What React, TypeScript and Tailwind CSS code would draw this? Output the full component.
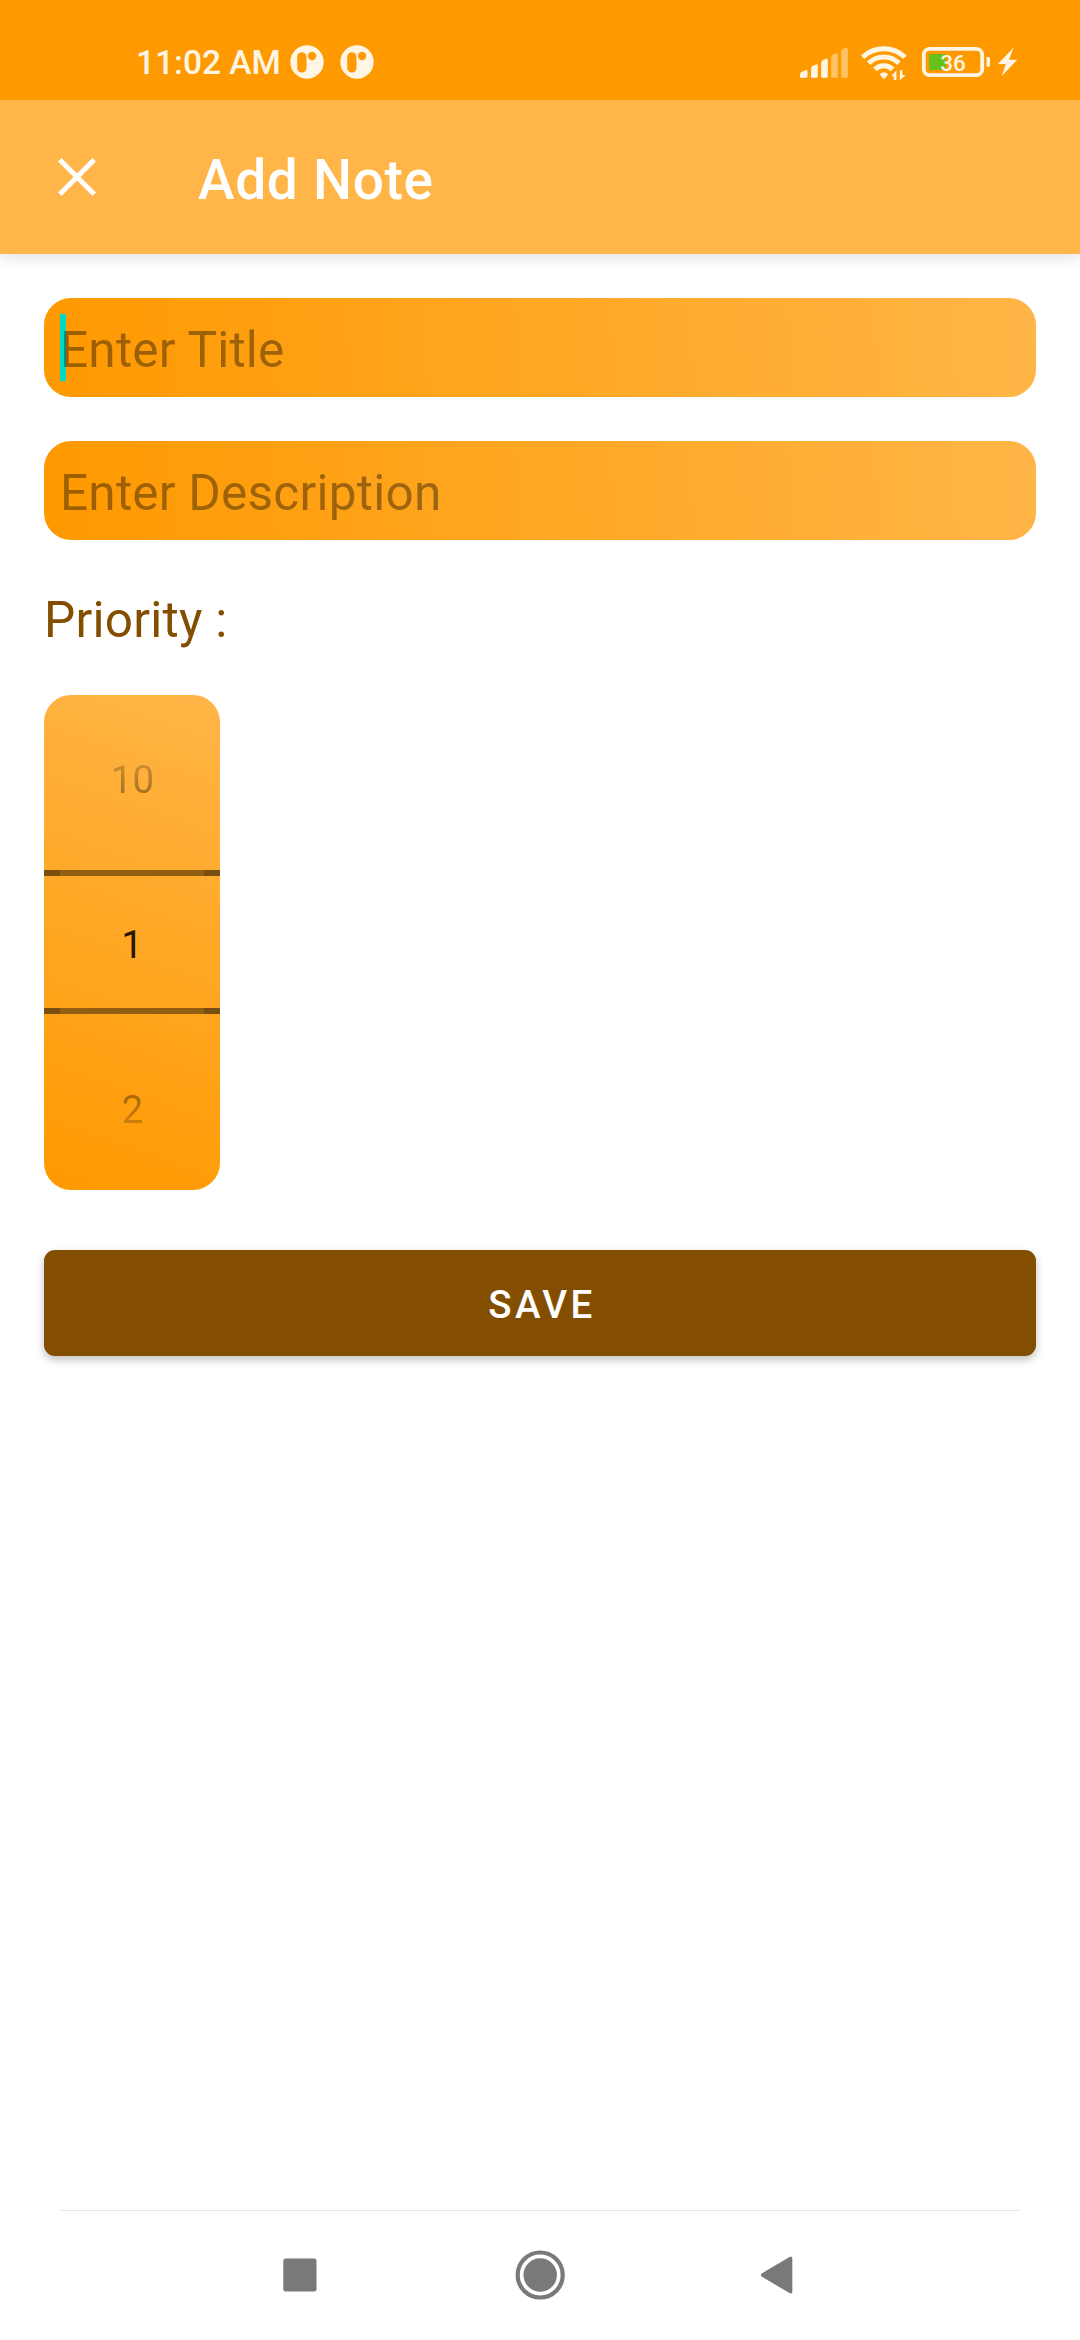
import React from "react";

function NotificationIcon() {
  return (
    <svg width="34" height="34" viewBox="0 0 34 34">
      <circle cx="17" cy="17" r="16.7" fill="#fff5e5" />
      <rect x="7.2" y="7.2" width="9.3" height="20.4" rx="4.65" fill="#ff9b06" />
      <circle cx="22.1" cy="11" r="4.2" fill="#ff9b06" />
    </svg>
  );
}

function StatusIcons() {
  return (
    <svg className="ml-auto" width="220" height="40" viewBox="800 42 220 40" fill="none">
      <g fill="#fff5e5">
        <path d="M800 77.8V74.6Q800 72.6 802 71.8L806 70.1Q807.5 69.6 807.5 71.2V76.4Q807.5 77.8 806 77.8Z" />
        <path d="M811 77.8V68.4Q811 66.8 812.6 66L816 64.5Q817.7 63.9 817.7 65.6V76.4Q817.7 77.8 816.2 77.8Z" />
        <path d="M821.2 77.8V62.6Q821.2 61 822.8 60.2L826.2 58.8Q827.8 58.2 827.8 60V76.4Q827.8 77.8 826.4 77.8Z" />
      </g>
      <g fill="#ffc266">
        <path d="M831.2 77.8V57Q831.2 55.4 832.8 54.6L836.2 53.2Q837.8 52.6 837.8 54.4V76.4Q837.8 77.8 836.4 77.8Z" />
        <path d="M841.2 77.8V51.4Q841.2 49.8 842.8 49L846.2 47.6Q847.8 47 847.8 48.8V76.4Q847.8 77.8 846.4 77.8Z" />
      </g>
      <g stroke="#fff5e5" strokeWidth="5">
        <path d="M862.6 57.2A30.5 30.5 0 0 1 905 57.2" />
        <path d="M868.7 63.2A21.5 21.5 0 0 1 898.9 63.2" />
        <path d="M875 69.4A12.7 12.7 0 0 1 892.6 69.4" />
      </g>
      <path d="M879.6 74.3Q884 70.2 888.2 74.3L884.8 78.4Q883.9 79.3 883 78.4Z" fill="#fff5e5" />
      <path d="M896.4 70.3V80H893.8V76.2H891.6ZM899.8 80.3V70.3H902.4V75H905.6Z" fill="#fff5e5" />
      <rect x="923.8" y="48.8" width="58.4" height="26.4" rx="6" stroke="#fff5e5" strokeWidth="3.8" />
      <path d="M931 54H946V70H931Q929 70 929 68V56Q929 54 931 54Z" fill="#68c01b" />
      <path d="M986.5 57H988.5Q990 57 990 58.6V65.2Q990 66.8 988.5 66.8H986.5Z" fill="#fff5e5" />
      <text x="953" y="71" textAnchor="middle" fill="#fff5e5" fontFamily="Roboto" fontWeight="500" fontSize="22.5">36</text>
      <path d="M1013.8 47.6L997.8 64H1005.8L1001.6 76.2L1017.2 59.8H1009Z" fill="#fff5e5" />
    </svg>
  );
}

function StatusBar() {
  return (
    <header className="relative z-10 flex h-[100px] items-center bg-[#ff9900] pt-[23px] pr-[60px] pl-[136px]">
      <span className="w-[154px] pt-0.5 text-[33.5px] leading-10 font-medium whitespace-nowrap text-[#fff5e5]">11:02 AM</span>
      <div className="flex gap-4">
        <NotificationIcon />
        <NotificationIcon />
      </div>
      <StatusIcons />
    </header>
  );
}

function AppBar() {
  return (
    <div className="flex h-[154px] items-center bg-[#ffb547] pl-[57px] shadow-[0_3px_14px_rgba(0,0,0,0.13)]">
      <button aria-label="Close">
        <svg width="40" height="40" viewBox="0 0 40 40" stroke="#fff" strokeWidth="5">
          <path d="M2.8 2.8L37.2 37.2M37.2 2.8L2.8 37.2" />
        </svg>
      </button>
      <h1 className="ml-[101px] pt-1.5 text-[55px] font-medium tracking-[0.7px] text-white">Add Note</h1>
    </div>
  );
}

function Field({ hint, focused = false }: { hint: string; focused?: boolean }) {
  return (
    <div className="relative flex h-[99px] items-center rounded-[27px] bg-[linear-gradient(84.3deg,#ff9900,#ffb547)] pl-4">
      {focused && <span className="absolute top-4 left-4 h-[67px] w-1.5 bg-[#03dac5]" />}
      <span className="relative pt-1.5 text-[49.5px] leading-[67px] tracking-[0.23px] text-black/38">{hint}</span>
    </div>
  );
}

function PickerDivider() {
  return (
    <div className="flex h-1.5 shrink-0">
      <span className="w-4 bg-[#784f10]" />
      <span className="flex-1 bg-[#925f12]" />
      <span className="w-4 bg-[#784f10]" />
    </div>
  );
}

function PriorityPicker() {
  return (
    <div className="mt-[41px] flex h-[495px] w-44 flex-col rounded-[27px] bg-[linear-gradient(19.57deg,#ff9900,#ffb547)] text-center text-[38.5px] leading-[46px]">
      <div className="h-[175px] pt-[62px]">
        <span className="bg-linear-to-b from-black/15 to-black/40 bg-clip-text pl-px text-transparent">10</span>
      </div>
      <PickerDivider />
      <div className="h-[132px] pt-[46px] text-black/87">1</div>
      <PickerDivider />
      <div className="flex-1 pt-[73px]">
        <span className="bg-linear-to-b from-black/40 to-black/15 bg-clip-text pl-px text-transparent">2</span>
      </div>
    </div>
  );
}

function NavigationBar() {
  return (
    <nav className="mx-[60px] mt-auto flex h-[130px] items-center border-t border-[#e6e6e6] pb-px pl-[223px] text-[#797979]">
      <svg width="34" height="34" viewBox="0 0 34 34" fill="currentColor">
        <rect x="0.3" y="0.4" width="33.2" height="33.2" rx="2.5" />
      </svg>
      <svg className="ml-[198px]" width="50" height="50" viewBox="0 0 50 50" fill="currentColor">
        <circle cx="25.2" cy="25" r="16.7" />
        <circle cx="25.2" cy="25" r="22.5" fill="none" stroke="currentColor" strokeWidth="4.2" />
      </svg>
      <svg className="ml-[195px]" width="34" height="40" viewBox="0 0 34 40" fill="currentColor">
        <path d="M1.7 18.4L29.5 1.9Q32.3 0.7 32.3 3.5V36.5Q32.3 39.3 29.5 38.1L1.7 21.6Q0 20 1.7 18.4Z" />
      </svg>
    </nav>
  );
}

export default function App() {
  return (
    <div className="flex h-[2340px] w-[1080px] flex-col overflow-hidden bg-white font-['Roboto',sans-serif]">
      <StatusBar />
      <AppBar />
      <main className="flex flex-col px-11 pt-11">
        <Field hint="Enter Title" focused />
        <div className="h-11" />
        <Field hint="Enter Description" />
        <label className="mt-[47px] text-[49.5px] leading-[67px] tracking-[0.25px] text-[#834e00]">Priority :</label>
        <PriorityPicker />
        <button className="mt-[60px] h-[106px] rounded-[11px] bg-[#834e00] pt-1 pl-1 text-[38.5px] font-medium tracking-[3.4px] text-white shadow-[0_4px_8px_rgba(0,0,0,0.24)]">
          SAVE
        </button>
      </main>
      <NavigationBar />
    </div>
  );
}
